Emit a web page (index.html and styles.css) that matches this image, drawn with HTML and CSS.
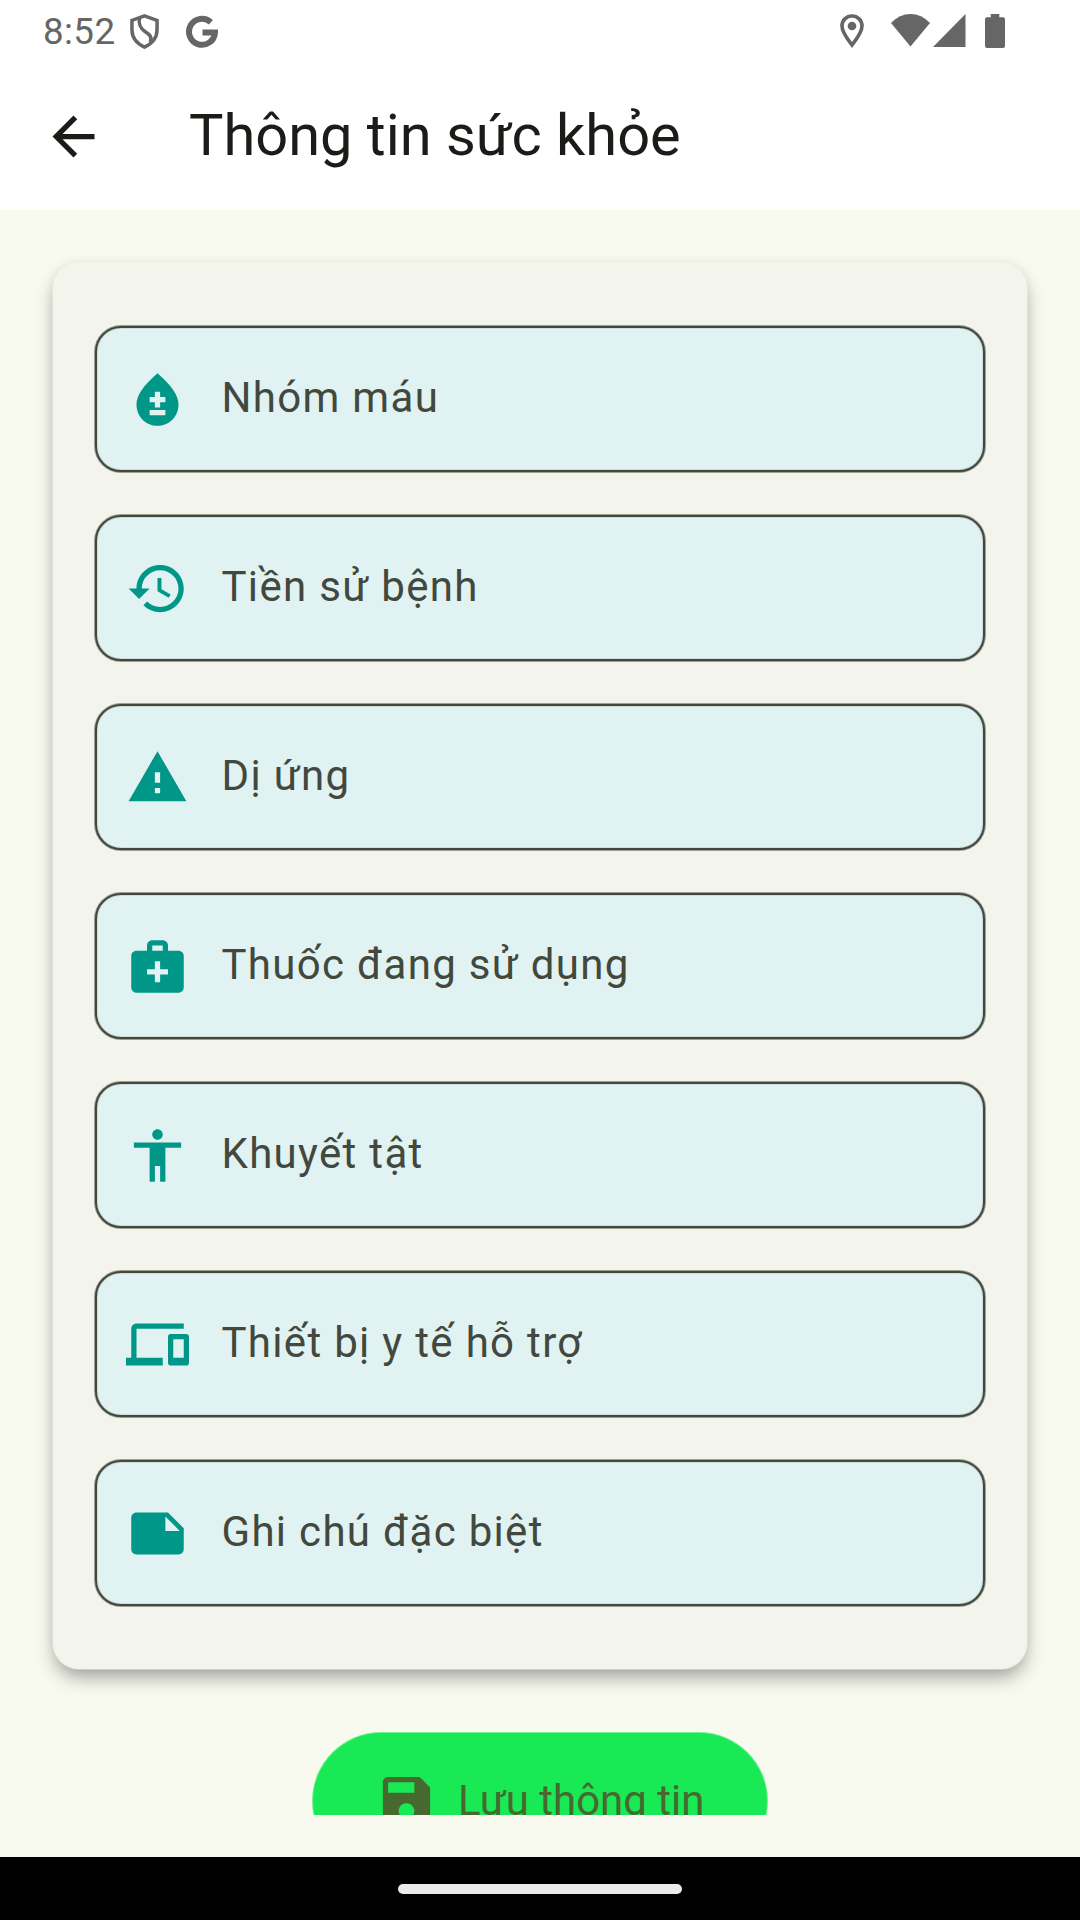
FILE: index.html
```html
<!DOCTYPE html>
<html lang="vi">
<head>
<meta charset="utf-8">
<title>Thông tin sức khỏe</title>
<link rel="stylesheet" href="styles.css">
</head>
<body>
<div class="screen">
  <header class="top">
    <div class="status">
      <span class="clock">8:52</span>
      <svg class="shield" viewBox="0 0 30 36"><path d="M15 1.800 28 6.500V16c0 8.500-5 14.500-13 18.200C7 30.500 2 24.500 2 16V6.500z"/><path d="M9.800 4C8.600 11 10.500 14.500 15.500 18c5 3.200 7.500 5.500 5.500 11"/></svg>
      <svg class="google" viewBox="0 0 32 34"><path d="M24.900 7.300A13 13 0 1 0 29 17.500H16.500"/></svg>
      <span class="spacer"></span>
      <svg class="pin" viewBox="0 0 24 34"><path d="M12 2C6.300 2 2 6.300 2 12c0 6.500 5.500 13 10 19 4.500-6 10-12.500 10-19C22 6.300 17.700 2 12 2z"/><circle cx="12" cy="12" r="4.300"/></svg>
      <svg class="wifi" viewBox="0 0 39 33"><path d="M0 9Q8.500 0 19.500 0T39 9L19.500 32.500z"/></svg>
      <svg class="signal" viewBox="0 0 33 33"><path d="M32.500 0V33H0z"/></svg>
      <svg class="battery" viewBox="0 0 20 34"><path d="M5.700 0h8.600v3.300H18a2 2 0 0 1 2 2V32a2 2 0 0 1-2 2H2a2 2 0 0 1-2-2V5.300a2 2 0 0 1 2-2h3.700z"/></svg>
    </div>
    <div class="appbar">
      <svg class="icon" viewBox="0 0 24 24"><path d="M20 11H7.830l5.590-5.590L12 4l-8 8 8 8 1.410-1.410L7.830 13H20z"/></svg>
      <h1 class="title">Thông tin sức khỏe</h1>
    </div>
  </header>
  <main class="content">
    <section class="card">
      <div class="field">
        <svg class="icon" viewBox="0 0 24 24"><path d="M12 2c-5.330 4.550-8 8.480-8 11.800 0 4.980 3.800 8.200 8 8.200s8-3.220 8-8.200c0-3.320-2.670-7.250-8-11.800zm3 16H9v-2h6v2zm0-5h-2v2h-2v-2H9v-2h2V9h2v2h2v2z"/></svg>
        <span class="label">Nhóm máu</span>
      </div>
      <div class="field">
        <svg class="icon" viewBox="0 0 24 24"><path d="M13 3c-4.970 0-9 4.030-9 9H1l3.890 3.890.07.14L9 12H6c0-3.870 3.130-7 7-7s7 3.130 7 7-3.130 7-7 7c-1.930 0-3.680-.79-4.940-2.060l-1.420 1.420C8.270 19.990 10.510 21 13 21c4.970 0 9-4.030 9-9s-4.030-9-9-9zm-1 5v5l4.280 2.540.72-1.210-3.500-2.080V8H12z"/></svg>
        <span class="label">Tiền sử bệnh</span>
      </div>
      <div class="field">
        <svg class="icon" viewBox="0 0 24 24"><path d="M1 21h22L12 2 1 21zm12-3h-2v-2h2v2zm0-4h-2v-4h2v4z"/></svg>
        <span class="label">Dị ứng</span>
      </div>
      <div class="field">
        <svg class="icon" viewBox="0 0 24 24"><path d="M20 6h-4V4c0-1.100-.9-2-2-2h-4c-1.100 0-2 .9-2 2v2H4c-1.100 0-2 .9-2 2v12c0 1.100.9 2 2 2h16c1.100 0 2-.9 2-2V8c0-1.100-.9-2-2-2zM10 4h4v2h-4V4zm6 11h-3v3h-2v-3H8v-2h3v-3h2v3h3v2z"/></svg>
        <span class="label">Thuốc đang sử dụng</span>
      </div>
      <div class="field">
        <svg class="icon" viewBox="0 0 24 24"><path d="M12 2c1.100 0 2 .9 2 2s-.9 2-2 2-2-.9-2-2 .9-2 2-2zm9 7h-6v13h-2v-6h-2v6H9V9H3V7h18v2z"/></svg>
        <span class="label">Khuyết tật</span>
      </div>
      <div class="field">
        <svg class="icon" viewBox="0 0 24 24"><path d="M4 6h18V4H4c-1.100 0-2 .9-2 2v11H0v3h14v-3H4V6zm19 2h-6c-.55 0-1 .45-1 1v10c0 .55.45 1 1 1h6c.55 0 1-.45 1-1V9c0-.55-.45-1-1-1zm-1 9h-4v-7h4v7z"/></svg>
        <span class="label">Thiết bị y tế hỗ trợ</span>
      </div>
      <div class="field">
        <svg class="icon" viewBox="0 0 24 24"><path d="M22 10l-6-6H4c-1.100 0-2 .9-2 2v12.010c0 1.100.9 1.990 2 1.990l16-.01c1.100 0 2-.89 2-1.990v-8zm-7-4.500l5.500 5.500H15V5.500z"/></svg>
        <span class="label">Ghi chú đặc biệt</span>
      </div>
    </section>
    <button class="save" type="button">
      <svg class="icon" viewBox="0 0 24 24"><path d="M17 3H5c-1.110 0-2 .9-2 2v14c0 1.100.89 2 2 2h14c1.100 0 2-.9 2-2V7l-4-4zm-5 16c-1.660 0-3-1.340-3-3s1.340-3 3-3 3 1.340 3 3-1.340 3-3 3zm3-10H5V5h10v4z"/></svg>
      <span>Lưu thông tin</span>
    </button>
  </main>
  <footer class="navbar"><span class="handle"></span></footer>
</div>
</body>
</html>
```
FILE: styles.css
```css
* { box-sizing: border-box; }

body {
  margin: 0;
  font-family: Roboto, sans-serif;
  background: #f8faf0;
}

.screen {
  display: flex;
  flex-direction: column;
  width: 1080px;
  height: 1920px;
  overflow: hidden;
}

svg {
  display: block;
  flex: none;
  fill: currentColor;
}

.icon {
  width: 63px;
  height: 63px;
}

/* Status bar and app bar */
.top {
  flex: none;
  height: 210px;
  background: #fff;
}

.status {
  display: flex;
  align-items: flex-start;
  height: 63px;
  padding: 14px 75px 0 43px;
  color: #666;
}

.clock {
  width: 87px;
  margin-top: -4px;
  font-size: 36.75px;
  letter-spacing: 0.4px;
  line-height: 43px;
}

.shield {
  width: 29px;
  height: 35px;
}

.shield path,
.google path,
.pin path {
  fill: none;
  stroke: currentColor;
  stroke-width: 3.6;
}

.google {
  width: 32px;
  height: 34px;
  margin: 1px 0 0 27px;
}

.google path { stroke-width: 6; }

.spacer { flex: 1; }

.pin {
  width: 24px;
  height: 34px;
  margin-right: 27px;
}

.wifi {
  width: 39px;
  height: 33px;
  margin-right: 3px;
}

.signal {
  width: 33px;
  height: 33px;
  margin-right: 19px;
}

.battery {
  width: 20px;
  height: 34px;
}

.appbar {
  display: flex;
  align-items: center;
  gap: 84px;
  height: 147px;
  padding-left: 42px;
  color: #1b1c18;
}

.title {
  margin: 0;
  padding-bottom: 4px;
  font-size: 57.75px;
  font-weight: 400;
  line-height: 74px;
  white-space: nowrap;
}

/* Scrolling area, cut off above the navigation bar */
.content {
  display: flex;
  flex-direction: column;
  align-items: center;
  flex: none;
  height: 1605px;
  margin-bottom: 42px;
  padding-top: 52px;
  overflow: hidden;
}

.card {
  display: flex;
  flex-direction: column;
  flex: none;
  gap: 43px;
  width: 974px;
  height: 1407px;
  padding: 64px 42px 63px;
  border-radius: 26px;
  background: #f3f4eb;
  box-shadow:
    0 0 0 1px rgba(238, 239, 230, 0.5),
    0 10px 20px -3px rgba(0, 0, 0, 0.38),
    0 1px 10px rgba(0, 0, 0, 0.05);
}

.field {
  display: flex;
  align-items: center;
  gap: 32.5px;
  flex: none;
  height: 146px;
  padding-left: 29px;
  border: 2px solid #43483e;
  border-radius: 26px;
  background: #e0f2f1;
  box-shadow:
    0 0 0 1px rgba(67, 72, 62, 0.5),
    inset 0 0 0 1px rgba(67, 72, 62, 0.12);
  color: #009688;
}

.label {
  padding-bottom: 4px;
  color: #43483e;
  font-size: 42px;
  letter-spacing: 1.3125px;
  line-height: 63px;
  white-space: nowrap;
}

.save {
  display: flex;
  align-items: center;
  gap: 20px;
  flex: none;
  width: 454px;
  height: 136px;
  margin-top: 64px;
  padding: 0 0 0 62px;
  border: 0;
  border-radius: 68px;
  background: #19e955;
  box-shadow: 0 0 0 1px rgba(25, 233, 85, 0.6);
  color: #47682f;
  font: 400 42px/60px Roboto, sans-serif;
  white-space: nowrap;
}

.save .icon { margin-bottom: 1px; }

/* Gesture navigation */
.navbar {
  display: flex;
  align-items: flex-start;
  justify-content: center;
  flex: none;
  height: 63px;
  padding-top: 27px;
  background: #000;
}

.handle {
  width: 284px;
  height: 10px;
  border-radius: 5px;
  background: #ebebeb;
}
```
